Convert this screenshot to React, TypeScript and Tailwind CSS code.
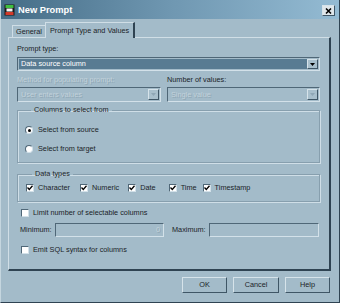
import React from 'react';

const sunken = 'border-t border-l border-[#4f6777] border-b border-r border-b-[#d3e1e9] border-r-[#d3e1e9]';
const raised = 'border-t border-l border-[#d6e3ea] border-b border-r border-b-[#3f5666] border-r-[#3f5666]';
const dim = 'text-[#c2d2db] [text-shadow:1px_1px_0_#8fa7b5]';

function Arrow({ disabled }: { disabled?: boolean }) {
  return (
    <div className={`w-[11px] h-full bg-[#a8bfcc] flex items-center justify-center ${raised}`}>
      <svg width="5" height="3" viewBox="0 0 5 3">
        <path d="M0 0 H5 L2.5 3 Z" fill={disabled ? '#8ea6b5' : '#000'} />
      </svg>
    </div>
  );
}

function Combo({ text, selected, disabled, className = '' }: { text: string; selected?: boolean; disabled?: boolean; className?: string }) {
  return (
    <div className={`flex p-px ${sunken} ${className}`}>
      <div className={`flex-1 flex items-center pl-[2px] ${selected ? 'bg-[#587b92] text-white' : ''} ${disabled ? dim : ''}`}>
        {text}
      </div>
      <Arrow disabled={disabled} />
    </div>
  );
}

function CheckBox({ label, checked, className = '' }: { label: string; checked?: boolean; className?: string }) {
  return (
    <div className={`flex items-center h-[12px] ${className}`}>
      <span className={`w-[8px] h-[8px] bg-white flex items-center justify-center ${sunken}`}>
        {checked && (
          <svg width="6" height="6" viewBox="0 0 6 6">
            <path d="M0.5 2.5 L2.3 4.5 L5.5 0.8" stroke="#000" strokeWidth="1.3" fill="none" />
          </svg>
        )}
      </span>
      <span className="ml-[4px]">{label}</span>
    </div>
  );
}

function Radio({ label, checked }: { label: string; checked?: boolean }) {
  return (
    <div className="flex items-center h-[12px]">
      <span className="w-[8px] h-[8px] rounded-full bg-white border border-[#4f6777] border-b-[#d3e1e9] border-r-[#d3e1e9] flex items-center justify-center">
        {checked && <span className="w-[3px] h-[3px] rounded-full bg-black" />}
      </span>
      <span className="ml-[5px]">{label}</span>
    </div>
  );
}

function Button({ label, className = '' }: { label: string; className?: string }) {
  return (
    <button className={`h-[16px] flex items-center justify-center bg-[#a3bbc9] ${raised} ${className}`}>
      {label}
    </button>
  );
}

const groupBorder = 'border border-[#879fae] shadow-[inset_1px_1px_0_#cfdee7,1px_1px_0_#cfdee7]';

export default function App() {
  return (
    <div className="w-[340px] h-[303px] bg-[#a3bbc9] text-[#1b2328] text-[7.3px] leading-[10px] font-['Tahoma','Liberation_Sans',Arial,sans-serif] flex flex-col border-l border-l-[#c5d6df] border-r border-r-[#2f4352] border-b border-b-[#2f4352] overflow-hidden">
      {/* title bar */}
      <div className="h-[19px] shrink-0 flex items-center bg-gradient-to-r from-[#456d87] via-[#6f97b1] to-[#94bbd3] pl-[3px] pr-[4px]">
        <svg width="11" height="12" viewBox="0 0 11 12">
          <rect x="0.5" y="0.5" width="10" height="11" fill="#1a1a1a" />
          <rect x="1.5" y="1" width="8" height="3" fill="#3fbf3f" />
          <rect x="2.5" y="4.5" width="6" height="3" fill="#f4f4f4" />
          <rect x="1.5" y="8" width="8" height="3" fill="#d23a2a" />
        </svg>
        <span className="ml-[3px] text-white font-bold text-[9.3px]">New Prompt</span>
        <div className="flex-1" />
        <div className={`w-[13px] h-[11px] mt-[2px] bg-[#dfe7eb] flex items-center justify-center ${raised}`}>
          <svg width="7" height="6" viewBox="0 0 7 6">
            <path d="M1 0.5 L6 5.5 M6 0.5 L1 5.5" stroke="#000" strokeWidth="1.5" />
          </svg>
        </div>
      </div>

      <div className="pl-[7px] pr-[8px] flex flex-col">
        {/* tabs */}
        <div className="flex items-end h-[15px] mt-[3px] pl-[4px] relative z-10">
          <div className="h-[12px] px-[3px] flex items-center border-t border-l border-[#d0dee6]">General</div>
          <div className="h-[16px] -mb-px px-[4px] flex items-center bg-[#a3bbc9] border-t border-l border-[#d0dee6] border-r-2 border-r-[#2f4352]">
            Prompt Type and Values
          </div>
        </div>

        {/* panel */}
        <div className="h-[234px] border-t border-l border-[#d0dee6] border-r-2 border-b-2 border-r-[#2f4352] border-b-[#2f4352] pl-[8px] pr-[9px] pt-[6px] flex flex-col">
          <div className="h-[10px]">Prompt type:</div>
          <Combo text="Data source column" selected className="h-[14px] mt-[3px]" />
          <div className="flex mt-[4px]">
            <div className={`w-[144px] h-[10px] ${dim}`}>Method for populating prompt:</div>
            <div className="ml-[6px] h-[10px]">Number of values:</div>
          </div>
          <div className="flex mt-[2px]">
            <Combo text="User enters values" disabled className="w-[144px] h-[15px]" />
            <Combo text="Single value" disabled className="ml-[6px] flex-1 h-[15px]" />
          </div>

          <fieldset className={`mt-[3px] h-[58px] pl-[7px] ${groupBorder}`}>
            <legend className="ml-[6px] px-[3px] leading-[10px]">Columns to select from</legend>
            <div className="mt-[9px] flex flex-col gap-[7px]">
              <Radio label="Select from source" checked />
              <Radio label="Select from target" />
            </div>
          </fieldset>

          <fieldset className={`mt-[6px] h-[33px] pl-[8px] ${groupBorder}`}>
            <legend className="ml-[6px] px-[3px] leading-[10px]">Data types</legend>
            <div className="mt-[3px] flex">
              <CheckBox label="Character" checked />
              <CheckBox label="Numeric" checked className="ml-[10px]" />
              <CheckBox label="Date" checked className="ml-[9px]" />
              <CheckBox label="Time" checked className="ml-[13px]" />
              <CheckBox label="Timestamp" checked className="ml-[6px]" />
            </div>
          </fieldset>

          <CheckBox label="Limit number of selectable columns" className="mt-[5px] ml-[4px]" />

          <div className="flex items-center mt-[4px] h-[14px]">
            <div className="ml-[3px] w-[35px]">Minimum:</div>
            <div className={`w-[109px] h-[14px] flex items-center justify-end pr-[3px] ${dim} ${sunken}`}>0</div>
            <div className="ml-[8px] w-[37px]">Maximum:</div>
            <div className={`w-[110px] h-[14px] ${sunken}`} />
          </div>

          <CheckBox label="Emit SQL syntax for columns" className="mt-[7px] ml-[4px]" />
        </div>

        {/* buttons */}
        <div className="flex justify-end mt-[6px] gap-[6px] pr-[1px]">
          <Button label="OK" className="w-[45px]" />
          <Button label="Cancel" className="w-[46px]" />
          <Button label="Help" className="w-[45px]" />
        </div>
      </div>
    </div>
  );
}
